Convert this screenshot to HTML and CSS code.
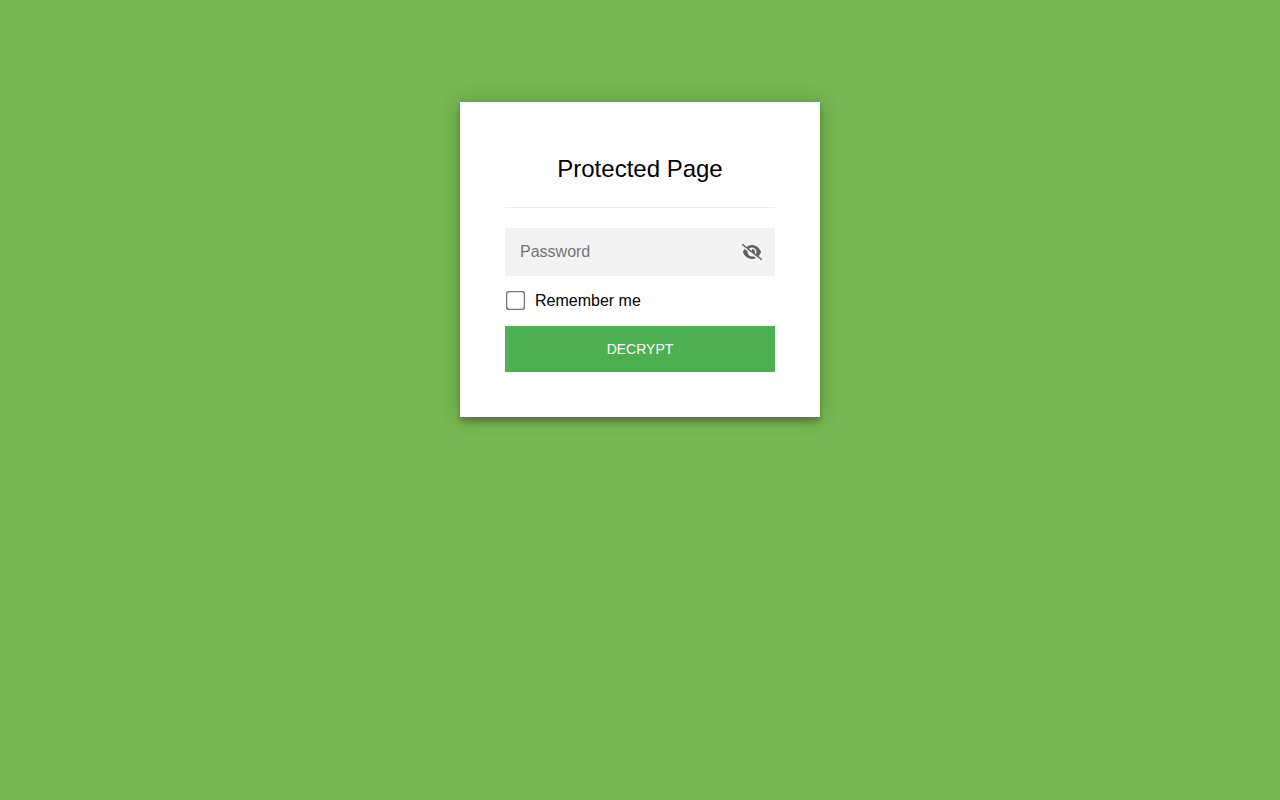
FILE: index.html
```
<!DOCTYPE html>
<html lang="en">
<head>
    <meta charset="UTF-8">
    <meta name="viewport" content="width=device-width, initial-scale=1.0">
    <title>Protected Page</title>
    <link rel="stylesheet" href="styles.css">
</head>
<body>
    <main class="page">
        <div class="form">
            <h1 class="title">Protected Page</h1>
            <hr class="divider">

            <form id="decrypt-form" action="#" method="post">
                <div class="password-container">
                    <input class="password" id="password" type="password" name="password" placeholder="Password" aria-label="Password">
                    <button class="toggle-visibility" id="toggle-visibility" type="button" aria-label="Show password">
                        <svg width="20" height="16" viewBox="0 0 640 512" fill="currentColor" aria-hidden="true">
                            <path d="M38.8 5.1C28.4-3.1 13.3-1.2 5.1 9.2S-1.2 34.7 9.2 42.9l592 464c10.4 8.2 25.5 6.3 33.7-4.1s6.3-25.5-4.1-33.7L525.6 386.7c39.6-40.6 66.4-86.1 79.9-118.4c3.3-7.9 3.3-16.7 0-24.6c-14.9-35.7-46.2-87.7-93-131.1C465.5 68.8 400.8 32 320 32c-68.2 0-125 26.3-169.3 60.8L38.8 5.1zM223.1 149.5C248.6 126.2 282.7 112 320 112c79.5 0 144 64.5 144 144c0 24.9-6.3 48.3-17.4 68.7L408 294.5c8.4-19.3 10.6-41.4 4.8-63.3c-11.1-41.5-47.8-69.4-88.6-71.1c-5.8-.2-9.2 6.1-7.4 11.7c2.1 6.4 3.3 13.2 3.3 20.3c0 10.2-2.4 19.8-6.6 28.3l-90.3-70.8zM373 389.9c-16.4 6.5-34.3 10.1-53 10.1c-79.5 0-144-64.5-144-144c0-6.9 .5-13.6 1.4-20.2L83.1 161.5C60.3 191.2 44 220.8 34.5 243.7c-3.3 7.9-3.3 16.7 0 24.6c14.9 35.7 46.2 87.7 93 131.1C174.5 443.2 239.2 480 320 480c47.8 0 89.9-12.9 126.2-32.5L373 389.9z"/>
                        </svg>
                    </button>
                </div>

                <label class="remember" for="remember">
                    <input id="remember" type="checkbox" name="remember">
                    Remember me
                </label>

                <button class="decrypt-button" type="submit">Decrypt</button>
            </form>
        </div>
    </main>

    <script>
        document.getElementById('toggle-visibility').addEventListener('click', function() {
            const password = document.getElementById('password');
            const hidden = password.type === 'password';

            password.type = hidden ? 'text' : 'password';
            this.setAttribute('aria-label', hidden ? 'Hide password' : 'Show password');
        });
    </script>
</body>
</html>
```
FILE: styles.css
```
* {
    box-sizing: border-box;
}
body {
    margin: 0;
    min-height: 100vh;
    background-color: #76b852;
    color: #000;
    font-family: "Liberation Sans", Arial, sans-serif;
    font-size: 16px;
}
.page {
    padding: 8% 0 0;
}
.form {
    max-width: 360px;
    margin: 0 auto 100px;
    padding: 45px;
    background-color: #fff;
    box-shadow: 0 0 20px 0 rgba(0, 0, 0, 0.2), 0 5px 5px 0 rgba(0, 0, 0, 0.24);
}
.title {
    margin: 0;
    padding: 8px 0 4px;
    font-size: 24px;
    font-weight: normal;
    line-height: 28px;
    text-align: center;
}
.divider {
    margin: 20px 0;
    border: 0;
    border-top: 1px solid #eee;
}
.password-container {
    display: flex;
    align-items: center;
    background-color: #f2f2f2;
}
.password {
    flex: 1;
    min-width: 0;
    padding: 15px;
    border: 0;
    outline: 0;
    background: none;
    font-family: inherit;
    font-size: 16px;
    line-height: 18px;
}
.toggle-visibility {
    display: flex;
    padding: 13px;
    border: 0;
    background: none;
    color: #606060;
    cursor: pointer;
}
.remember {
    display: flex;
    align-items: center;
    gap: 10px;
    margin: 15px 0;
    line-height: 20px;
    cursor: pointer;
}
.remember input {
    width: 13px;
    height: 13px;
    margin: 3px 3px 4px 4px;
    transform: scale(1.5);
}
.decrypt-button {
    width: 100%;
    padding: 15px;
    border: 0;
    background-color: #4caf50;
    color: #fff;
    font-family: inherit;
    font-size: 14px;
    line-height: 16px;
    text-transform: uppercase;
    cursor: pointer;
}
.decrypt-button:hover {
    background-color: #43a047;
}
```
